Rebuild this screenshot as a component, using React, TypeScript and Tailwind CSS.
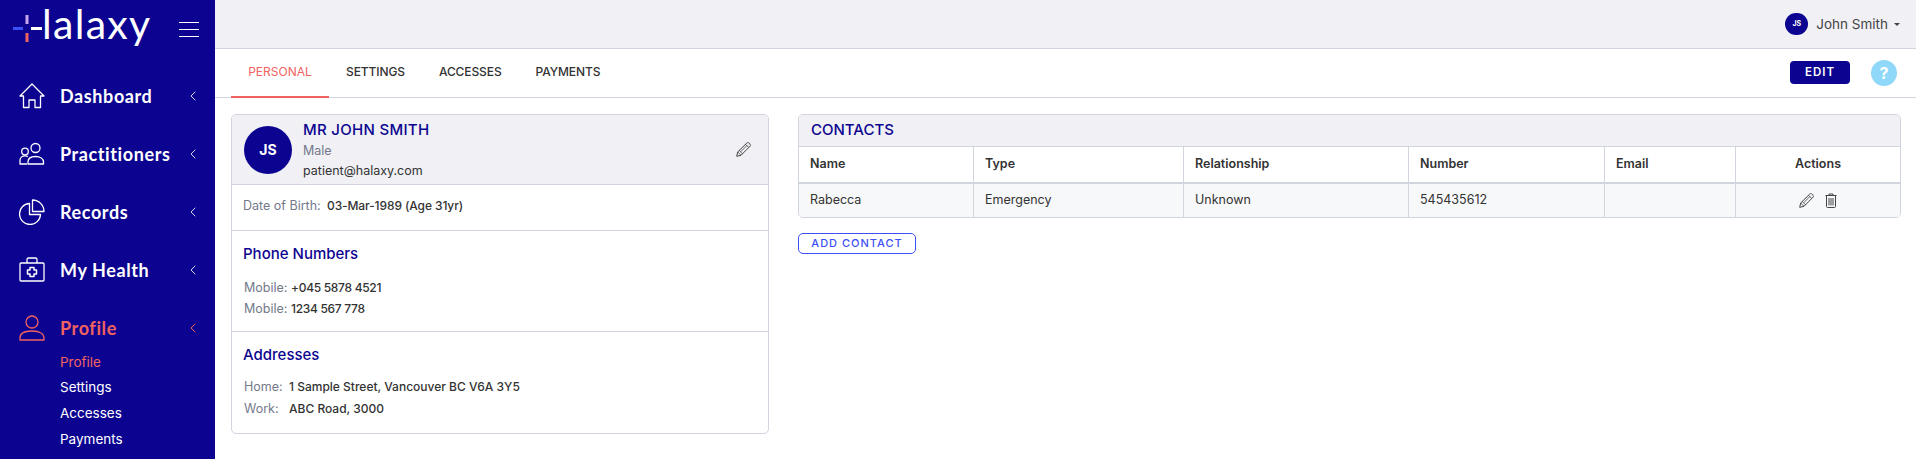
import React from 'react'
import { ChevronLeft } from 'lucide-react'

const navy = 'text-[#0c0490]'

const HomeIcon = () => (
  <svg width="26" height="26" viewBox="0 0 26 26" fill="none" stroke="currentColor" strokeWidth="1.3" strokeLinejoin="round">
    <path d="M1 13 13 1l12 12h-3.500v11.500H16V17h-6v7.500H4.500V13Z" />
  </svg>
)

const PeopleIcon = () => (
  <svg width="26" height="26" viewBox="0 0 26 26" fill="none" stroke="currentColor" strokeWidth="1.3">
    <circle cx="16.500" cy="7" r="4.500" />
    <path d="M9 23v-2c0-3.500 3-5.500 7.500-5.500S24.500 17.500 24.500 21v2H9Z" strokeLinejoin="round" />
    <circle cx="6" cy="10.500" r="3.300" />
    <path d="M9 15.500c-1-.5-2-.7-3-.7-3 0-5 2-5 4.500v3.700h7" strokeLinejoin="round" />
  </svg>
)

const PieIcon = () => (
  <svg width="26" height="26" viewBox="0 0 26 26" fill="none" stroke="currentColor" strokeWidth="1.3" strokeLinejoin="round">
    <path d="M10.500 4.500a10.500 10.500 0 1 0 11 11h-11v-11Z" />
    <path d="M13.500 1v11.500H25A11.500 11.500 0 0 0 13.500 1Z" />
  </svg>
)

const HealthIcon = () => (
  <svg width="26" height="26" viewBox="0 0 26 26" fill="none" stroke="currentColor" strokeWidth="1.3" strokeLinejoin="round">
    <rect x="1" y="6" width="24" height="18" rx="1" />
    <path d="M8 6V2.500c0-.8.700-1.500 1.500-1.500h7c.8 0 1.500.7 1.500 1.500V6" />
    <path d="M11 10.500h4v2.500h2.500v4H15v2.500h-4V17H8.500v-4H11v-2.500Z" strokeWidth="1.500" />
  </svg>
)

const PersonIcon = () => (
  <svg width="26" height="26" viewBox="0 0 26 26" fill="none" stroke="currentColor" strokeWidth="1.3" strokeLinejoin="round">
    <circle cx="13" cy="7" r="6" />
    <path d="M1 25v-2c0-4 4-7 12-7s12 3 12 7v2H1Z" />
  </svg>
)

const PencilIcon = () => (
  <svg width="15" height="15" viewBox="0 0 15 15" fill="none" stroke="#444" strokeWidth="1" strokeLinejoin="round">
    <path d="M.7 14.300l1-4.300L10.800 1c.6-.6 1.400-.6 2 0l1.200 1.200c.6.600.6 1.400 0 2L5 13.300.7 14.300Z" />
    <path d="M1.700 10 5 13.300M3.200 8.500l3.300 3.300M9.500 2.300l3.200 3.200M4.600 9.800l6.500-6.500" strokeWidth="0.800" />
  </svg>
)

const TrashIcon = () => (
  <svg width="12" height="15" viewBox="0 0 12 15" fill="none" stroke="#444" strokeWidth="1">
    <path d="M.5 2.500h11M4 2.500V1h4v1.500" />
    <path d="M1.500 2.500v11c0 .6.400 1 1 1h7c.6 0 1-.4 1-1v-11" />
    <path d="M4 5v7.500M6 5v7.500M8 5v7.500" />
  </svg>
)

const navItems = [
  { label: 'Dashboard', icon: <HomeIcon /> },
  { label: 'Practitioners', icon: <PeopleIcon /> },
  { label: 'Records', icon: <PieIcon /> },
  { label: 'My Health', icon: <HealthIcon /> },
]

const subItems = ['Profile', 'Settings', 'Accesses', 'Payments']

const contactCols = ['Name', 'Type', 'Relationship', 'Number', 'Email']
const contactRow = ['Rabecca', 'Emergency', 'Unknown', '545435612', '']

const Sidebar = () => (
  <aside className="w-[215px] h-[459px] shrink-0 bg-[#0c0490] text-white overflow-hidden">
    {/* Logo */}
    <div className="flex items-center h-[67px]">
      <svg width="45" height="30" viewBox="0 0 45 30" className="ml-[12px] mb-[9px] shrink-0" fill="none" strokeWidth="3">
        <path d="M15 1v9" stroke="#c9a8ee" />
        <path d="M15 19v9" stroke="#f0625f" />
        <path d="M1 14.500h10" stroke="#3d50f5" />
        <path d="M19 14.500h11" stroke="#ffffff" />
      </svg>
      <span className="-ml-[15px] mb-[20px] text-[41px] leading-none tracking-[1.300px] font-['Lato',sans-serif]">lalaxy</span>
      <div className="ml-auto mr-[16px] mb-[8px] flex flex-col gap-[5.500px] w-[20px]">
        <span className="h-[1.500px] bg-white" />
        <span className="h-[1.500px] bg-white" />
        <span className="h-[1.500px] bg-white" />
      </div>
    </div>

    <nav>
      {navItems.map((item) => (
        <div key={item.label} className="flex items-center h-[58px] pl-[19px] pr-[14px]">
          <span className="w-[41px] shrink-0">{item.icon}</span>
          <span className="text-[18px] font-bold font-['Lato',sans-serif] tracking-[0.6px]">{item.label}</span>
          <ChevronLeft className="ml-auto w-[16px] h-[16px] text-[#d5d4ee]" strokeWidth={1.5} />
        </div>
      ))}
      <div className="flex items-center h-[58px] pl-[19px] pr-[14px] text-[#f0625f]">
        <span className="w-[41px] shrink-0"><PersonIcon /></span>
        <span className="text-[18px] font-bold font-['Lato',sans-serif] tracking-[0.6px]">Profile</span>
        <ChevronLeft className="ml-auto w-[16px] h-[16px]" strokeWidth={1.5} />
      </div>
      <div className="pl-[60px] -mt-[8px]">
        {subItems.map((sub, i) => (
          <div key={sub} className={`h-[25.700px] flex items-center text-[13.500px] ${i === 0 ? 'text-[#f0625f]' : 'text-white'}`}>
            {sub}
          </div>
        ))}
      </div>
    </nav>
  </aside>
)

const TopBar = () => (
  <header className="h-[49px] shrink-0 bg-[#f0f0f5] border-b border-[#d1d5de] flex items-center justify-end pr-[16px]">
    <span className="w-[23px] h-[22px] rounded-full bg-[#0c0490] text-white text-[7px] font-bold flex items-center justify-center">JS</span>
    <span className="ml-[8px] text-[13.500px] text-[#444]">John Smith</span>
    <span className="ml-[6px] w-0 h-0 border-x-[3px] border-x-transparent border-t-[3px] border-t-[#444]" />
  </header>
)

const TabBar = () => (
  <div className="h-[49px] shrink-0 border-b border-[#d1d5de] flex items-stretch pl-[16px] pr-[19px]">
    <div className="w-[98px] -mb-[1px] border-b-2 border-[#f0625f] text-[#f0625f] text-[12px] flex items-center justify-center pb-[2px]">PERSONAL</div>
    {['SETTINGS', 'ACCESSES', 'PAYMENTS'].map((t) => (
      <div key={t} className="px-[17px] text-[12px] tracking-[-0.1px] font-medium text-[#333] flex items-center pb-[2px]">{t}</div>
    ))}
    <div className="ml-auto flex items-center gap-[21px] pb-[1px]">
      <button className="w-[60px] h-[23px] rounded-[4px] bg-[#0c0490] text-white text-[11.500px] font-semibold tracking-[1px]">EDIT</button>
      <span className="w-[26px] h-[26px] rounded-full bg-[#90d8f9] text-white text-[16px] font-bold flex items-center justify-center">?</span>
    </div>
  </div>
)

const Label = ({ children, w }: { children: React.ReactNode; w: string }) => (
  <span className={`${w} shrink-0 text-[12.500px] text-[#74798a]`}>{children}</span>
)

const ProfileCard = () => (
  <section className="w-[538px] h-[320px] shrink-0 border border-[#d1d5de] rounded-[5px] overflow-hidden text-[12px] text-[#333]">
    <div className="h-[70px] bg-[#f0f0f5] border-b border-[#d1d5de] flex items-center pl-[12px] pr-[17px]">
      <span className="w-[48px] h-[48px] rounded-full bg-[#0c0490] text-white text-[14px] font-bold flex items-center justify-center">JS</span>
      <div className="ml-[11px]">
        <div className={`text-[15px] leading-[22px] font-medium ${navy} tracking-[0.3px]`}>MR JOHN SMITH</div>
        <div className="text-[12.500px] leading-[20px] text-[#74798a]">Male</div>
        <div className="text-[12.500px] leading-[19px]">patient@halaxy.com</div>
      </div>
      <span className="ml-auto"><PencilIcon /></span>
    </div>
    <div className="h-[46px] border-b border-[#d1d5de] pl-[11px] pt-[12px] flex">
      <Label w="w-[84px]">Date of Birth:</Label>
      <span className="font-medium tracking-[-0.1px]">03-Mar-1989 (Age 31yr)</span>
    </div>
    <div className="h-[101px] border-b border-[#d1d5de] pl-[11px] pt-[12px]">
      <h3 className={`text-[15px] leading-[22px] font-medium ${navy}`}>Phone Numbers</h3>
      <div className="mt-[12px] flex leading-[21px] pl-[1px]">
        <Label w="w-[47px]">Mobile:</Label>
        <span className="font-medium tracking-[-0.3px]">+045 5878 4521</span>
      </div>
      <div className="flex leading-[21px] pl-[1px]">
        <Label w="w-[47px]">Mobile:</Label>
        <span className="font-medium tracking-[-0.3px]">1234 567 778</span>
      </div>
    </div>
    <div className="pl-[11px] pt-[12px]">
      <h3 className={`text-[15px] leading-[22px] font-medium ${navy}`}>Addresses</h3>
      <div className="mt-[10px] flex leading-[22px] pl-[1px]">
        <Label w="w-[45px]">Home:</Label>
        <span className="font-medium">1 Sample Street, Vancouver BC  V6A 3Y5</span>
      </div>
      <div className="flex leading-[22px] pl-[1px]">
        <Label w="w-[45px]">Work:</Label>
        <span className="font-medium">ABC Road, 3000</span>
      </div>
    </div>
  </section>
)

const ContactsCard = () => (
  <div className="flex-1 min-w-0">
    <section className="border border-[#d1d5de] rounded-[5px] overflow-hidden text-[12.500px] text-[#333]">
      <div className={`h-[32px] bg-[#f0f0f5] border-b border-[#d1d5de] flex items-center pl-[12px] text-[15px] font-medium ${navy}`}>CONTACTS</div>
      <div className="grid grid-cols-[175px_210px_225px_196px_131px_1fr] h-[37px] border-b-2 border-[#d1d5de] font-semibold">
        {contactCols.map((c) => (
          <div key={c} className="border-r border-[#d1d5de] pl-[11px] pb-[1px] flex items-center">{c}</div>
        ))}
        <div className="flex items-center justify-center pb-[1px]">Actions</div>
      </div>
      <div className="grid grid-cols-[175px_210px_225px_196px_131px_1fr] h-[33px] bg-[#f7f8fa]">
        {contactRow.map((v, i) => (
          <div key={i} className="border-r border-[#d1d5de] pl-[11px] pb-[1px] flex items-center">{v}</div>
        ))}
        <div className="flex items-center justify-center gap-[11px] pb-[1px]">
          <PencilIcon />
          <TrashIcon />
        </div>
      </div>
    </section>
    <button className="mt-[15px] w-[118px] h-[21px] border border-[#3d50f5] rounded-[5px] text-[#3d50f5] text-[11px] font-medium tracking-[1px] flex items-center justify-center">ADD CONTACT</button>
  </div>
)

export default function App() {
  return (
    <div className="flex w-[1916px] h-[459px] overflow-hidden bg-white font-['Inter',sans-serif]">
      <Sidebar />
      <main className="flex-1 min-w-0 flex flex-col">
        <TopBar />
        <TabBar />
        <div className="flex gap-[29px] pl-[16px] pr-[15px] pt-[16px]">
          <ProfileCard />
          <ContactsCard />
        </div>
      </main>
    </div>
  )
}
